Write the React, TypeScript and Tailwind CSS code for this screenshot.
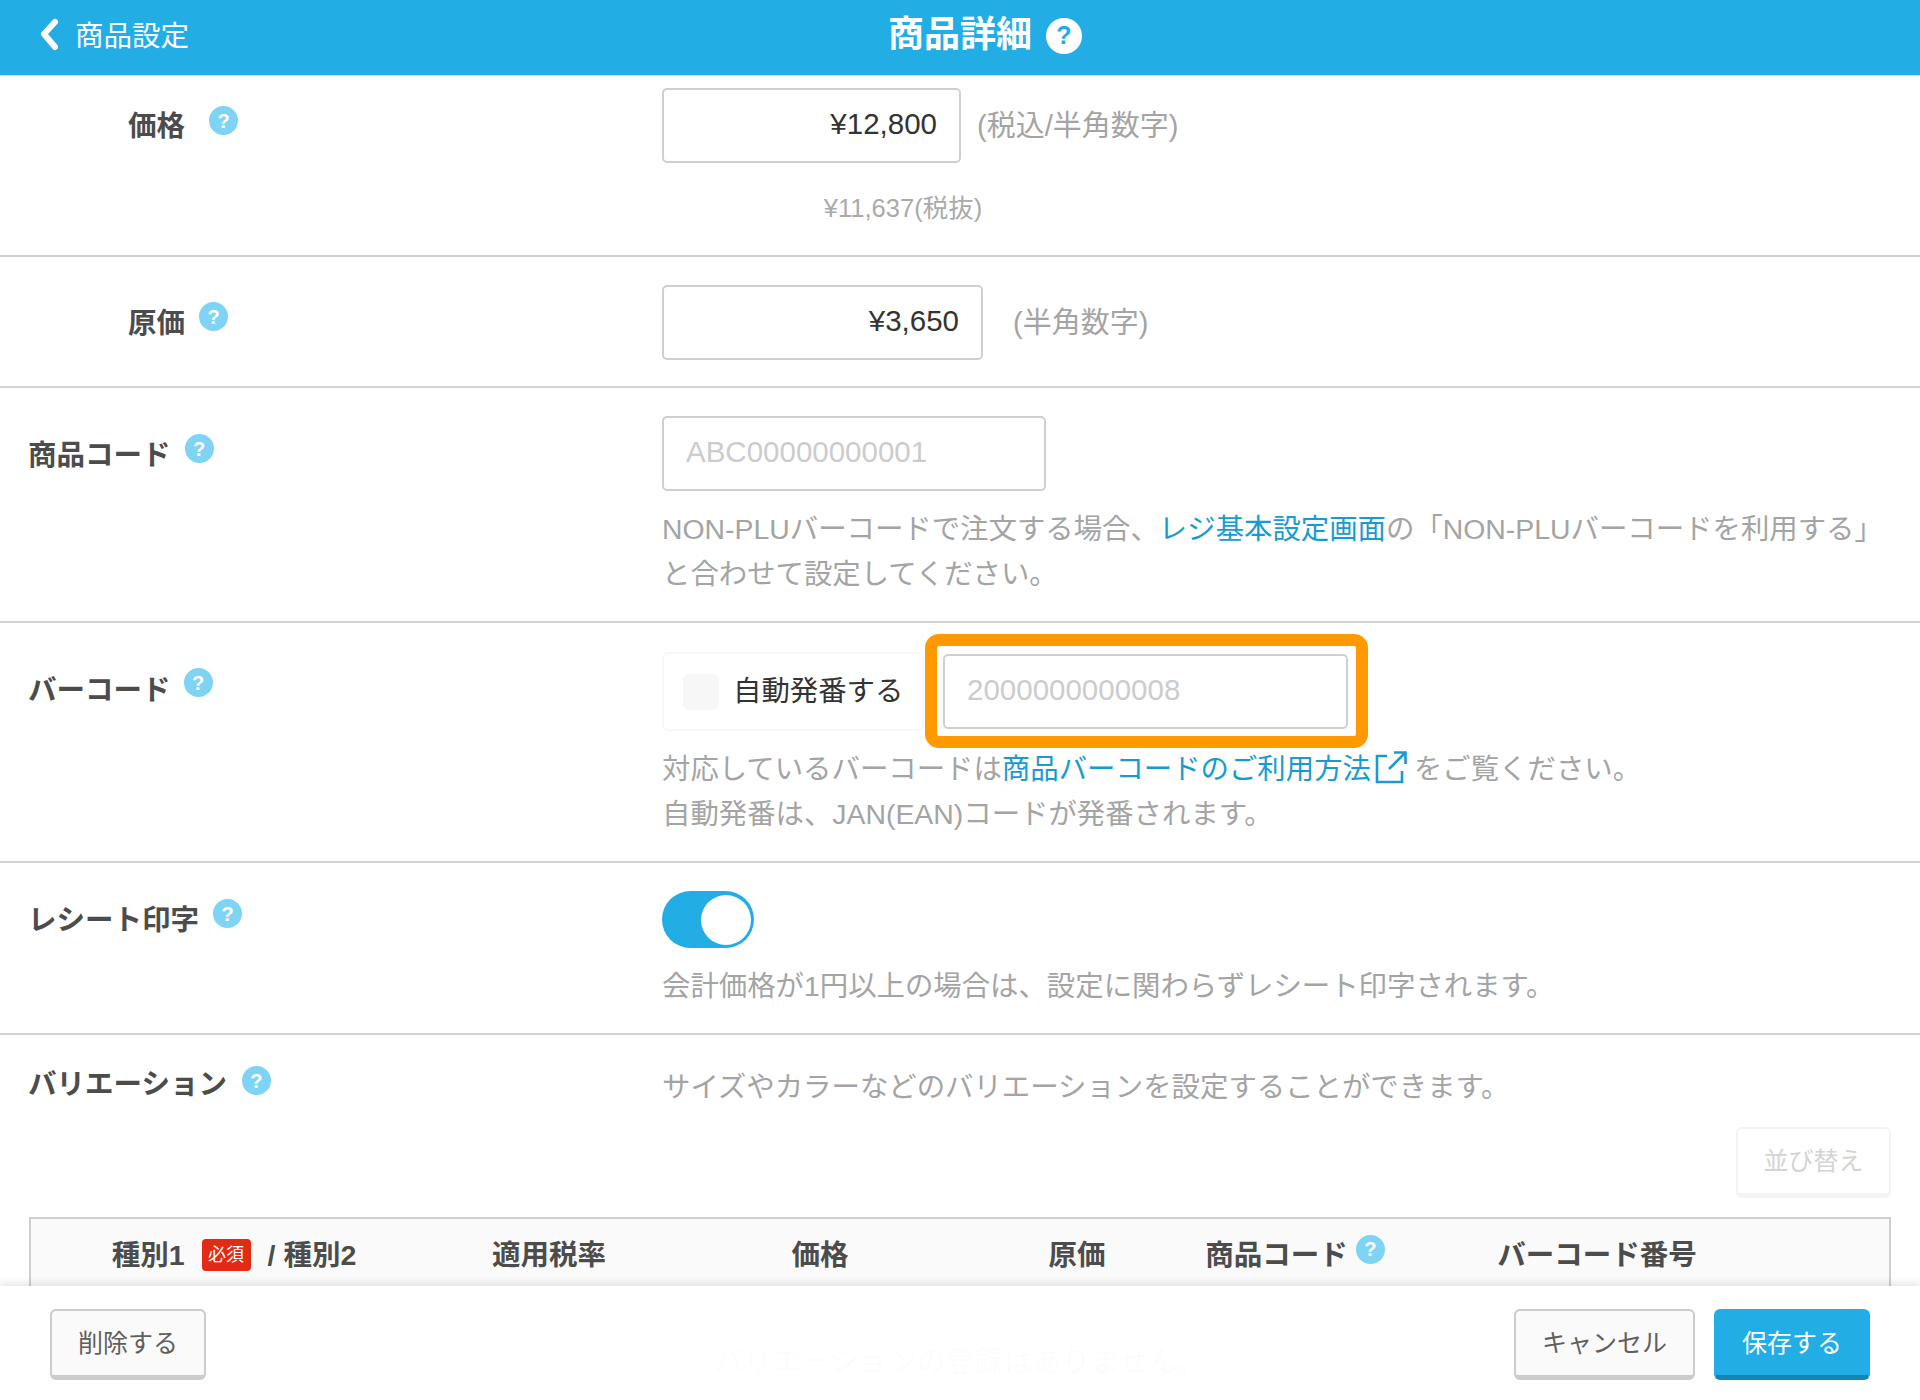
import React from "react";

function Help({ className = "" }: { className?: string }) {
  return (
    <span className={`inline-flex h-[29px] w-[29px] shrink-0 items-center justify-center rounded-full bg-[#7fd3f5] text-[20px] font-bold leading-none text-white ${className}`}>?</span>
  );
}

function Row({ label, labelClass, help, children, className }: { label: string; labelClass: string; help: string; children: React.ReactNode; className: string }) {
  return (
    <section className={`flex border-b-2 border-[#d2d2d2] ${className}`}>
      <div className={`relative flex h-fit w-[662px] shrink-0 items-start text-[28.5px] font-bold text-[#4c4c4c] ${labelClass}`}>
        <span className="leading-[40px]">{label}</span>
        <Help className={help} />
      </div>
      <div className="min-w-0 flex-1">{children}</div>
    </section>
  );
}

function Field({ className, value, muted }: { className: string; value: string; muted?: boolean }) {
  return (
    <div className={`flex h-[75px] shrink-0 items-center rounded-[5px] border-2 border-[#cfcfcf] bg-white px-[22px] pb-[2px] text-[29.5px] ${muted ? "text-[#cccccc]" : "justify-end text-[#333333]"} ${className}`}>
      {value}
    </div>
  );
}

function Button({ className, children }: { className: string; children: React.ReactNode }) {
  return (
    <div className={`flex h-[71px] items-center justify-center rounded-[6px] border-2 border-b-[5px] pt-[2px] text-[25px] ${className}`}>{children}</div>
  );
}

const desc = "text-[28.4px] leading-[45px] text-[#a4a4a4]";
const link = "text-[#1a9bd0]";

export default function App() {
  return (
    <div className="relative h-[1400px] w-[1920px] overflow-hidden bg-white font-['Liberation_Sans','Noto_Sans_CJK_JP',sans-serif] text-[28.4px]">
      <header className="flex h-[76px] items-center justify-center border-b-[1px] border-[#bfe6f7] bg-[#22aee5] pb-[6px] text-white">
        <div className="flex w-[300px] items-center pl-[39px] text-[28.5px]">
          <svg width="22" height="34" viewBox="0 0 22 34" fill="none" stroke="white" strokeWidth="6" strokeLinecap="round" strokeLinejoin="round">
            <path d="M16 4 L5 16 L16 29" />
          </svg>
          <span className="ml-[14px] pt-[4px]">商品設定</span>
        </div>
        <div className="flex flex-1 items-center justify-center pr-[250px] text-[36px] font-bold">
          <span>商品詳細</span>
          <span className="ml-[14px] mt-[2px] flex h-[36px] w-[36px] items-center justify-center rounded-full bg-white text-[25px] font-bold leading-none text-[#22aee5]">?</span>
        </div>
      </header>

      <Row label="価格" labelClass="pl-[128px] pt-[18px]" help="ml-[24px]" className="h-[181px] pt-[12px]">
        <div className="flex items-center">
          <Field className="w-[299px]" value="¥12,800" />
          <span className="ml-[16px] pt-[2px] text-[29px] text-[#a4a4a4]">(税込/半角数字)</span>
        </div>
        <div className="mt-[25px] w-[321px] pl-[161px] text-center text-[25.5px] leading-[40px] text-[#aaaaaa] whitespace-nowrap">¥11,637(税抜)</div>
      </Row>

      <Row label="原価" labelClass="pl-[128px] pt-[18px]" help="ml-[14px] -mt-[1px]" className="h-[131px] pt-[28px]">
        <div className="flex items-center">
          <Field className="w-[321px]" value="¥3,650" />
          <span className="ml-[30px] pt-[2px] text-[29px] text-[#a4a4a4]">(半角数字)</span>
        </div>
      </Row>

      <Row label="商品コード" labelClass="pl-[28px] pt-[19px]" help="ml-[14px] -mt-[1px]" className="h-[235px] pt-[28px]">
        <Field className="w-[384px]" value="ABC00000000001" muted />
        <p className={`mt-[16px] whitespace-nowrap ${desc}`}>
          NON-PLUバーコードで注文する場合、<span className={link}>レジ基本設定画面</span>の「NON-PLUバーコードを利用する」
        </p>
        <p className={desc}>と合わせて設定してください。</p>
      </Row>

      <Row label="バーコード" labelClass="pl-[28px] pt-[18px]" help="ml-[13px] -mt-[2px]" className="h-[240px] pt-[29px]">
        <div className="flex items-start">
          <div className="flex h-[79px] w-[262px] items-center rounded-[6px] border-2 border-[#f8f8f8] pl-[19px] text-[#333333]">
            <span className="h-[36px] w-[36px] rounded-[6px] bg-[#f7f7f7]" />
            <span className="ml-[14px] whitespace-nowrap">自動発番する</span>
          </div>
          <div className="relative ml-[19px] mt-[2px]">
            <Field className="w-[405px]" value="2000000000008" muted />
            <div className="absolute -bottom-[19px] -left-[18px] -right-[20px] -top-[20px] rounded-[14px] border-[12px] border-[#ff9900]" />
          </div>
        </div>
        <p className={`mt-[16px] flex items-center whitespace-nowrap ${desc}`}>
          対応しているバーコードは<span className={link}>商品バーコードのご利用方法</span>
          <svg className="ml-[4px] mr-[7px] -mt-[6px]" width="32" height="34" viewBox="0 0 32 34" fill="none" stroke="#1a9bd0" strokeWidth="2.6">
            <path d="M12 6 H2 V32 H27 V21" />
            <path d="M14 19 L30 3 M19 2.5 H30.5 V14" />
          </svg>
          をご覧ください。
        </p>
        <p className={desc}>自動発番は、JAN(EAN)コードが発番されます。</p>
      </Row>

      <Row label="レシート印字" labelClass="pl-[28px] pt-[9px]" help="ml-[14px] -mt-[1px]" className="h-[172px] pt-[28px]">
        <div className="flex h-[57px] w-[92px] items-center justify-end rounded-full bg-[#22aee5] pr-[3px]">
          <span className="h-[50px] w-[50px] rounded-full bg-white" />
        </div>
        <p className={`mt-[16px] whitespace-nowrap ${desc}`}>会計価格が1円以上の場合は、設定に関わらずレシート印字されます。</p>
      </Row>

      <div className="flex pb-[17px] pt-[30px]">
        <div className="flex w-[662px] shrink-0 items-start pl-[28px] text-[28.5px] font-bold text-[#4c4c4c]">
          <span className="-mt-[1px] leading-[40px]">バリエーション</span>
          <Help className="ml-[15px] mt-[1px]" />
        </div>
        <div className={desc}>サイズやカラーなどのバリエーションを設定することができます。</div>
      </div>

      <div className="mr-[29px] flex justify-end">
        <Button className="w-[155px] border-[#f4f4f4] bg-white text-[#d4d4d4]">並び替え</Button>
      </div>

      <div className="mx-[29px] mt-[19px] h-[260px] border-2 border-[#cfcfcf]">
        <div className="grid h-[96px] grid-cols-[406px_224px_318px_196px_240px_364px_1fr] items-center bg-[#fafafa] pb-[24px] text-center text-[28.5px] font-bold text-[#4c4c4c]">
          <div className="flex items-center justify-center">
            種別1
            <span className="mx-[17px] flex h-[32px] w-[49px] items-center justify-center rounded-[4px] bg-[#e32a14] text-[18px] font-normal text-white">必須</span>
            / 種別2
          </div>
          <div>適用税率</div>
          <div>価格</div>
          <div>原価</div>
          <div className="flex items-start justify-center">
            商品コード
            <Help className="ml-[8px] mt-[1px]" />
          </div>
          <div>バーコード番号</div>
        </div>
        <div className="pt-[26px] text-center text-[29px] text-[#a4a4a4]">バリエーションの登録はありません。</div>
      </div>

      <footer className="absolute inset-x-0 bottom-0 flex h-[114px] items-start justify-between bg-white/[0.97] pl-[50px] pr-[50px] pt-[23px] shadow-[0_-3px_8px_rgba(0,0,0,0.1)]">
        <Button className="w-[156px] border-[#cccccc] bg-[#fafafa] text-[#5f5f5f]">削除する</Button>
        <div className="flex gap-[19px]">
          <Button className="w-[181px] border-[#cccccc] bg-[#fafafa] text-[#5f5f5f]">キャンセル</Button>
          <Button className="w-[156px] border-[#22aee5] border-b-[#1284b5] bg-[#22aee5] text-white">保存する</Button>
        </div>
      </footer>
    </div>
  );
}
